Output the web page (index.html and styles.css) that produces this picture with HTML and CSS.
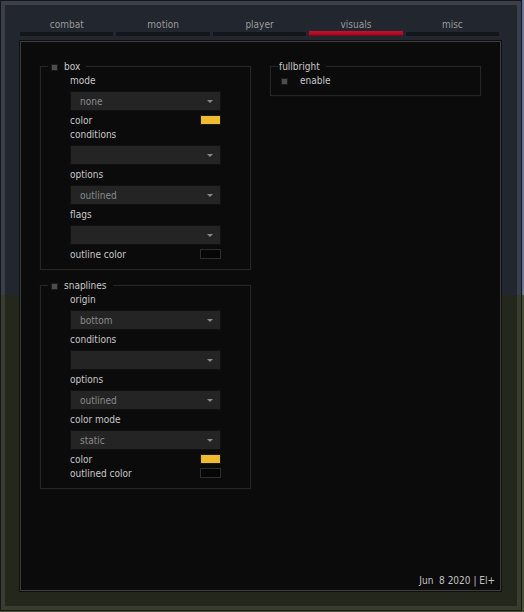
FILE: index.html
```html
<!DOCTYPE html>
<html>
<head>
<meta charset="utf-8">
<link rel="stylesheet" href="styles.css">
</head>
<body>
<div class="window">
  <div class="inner">
    <div class="tabs">
      <div class="tab"><span class="tab-label">combat</span><span class="tab-bar"></span></div>
      <div class="tab"><span class="tab-label">motion</span><span class="tab-bar"></span></div>
      <div class="tab"><span class="tab-label">player</span><span class="tab-bar"></span></div>
      <div class="tab active"><span class="tab-label">visuals</span><span class="tab-bar"></span></div>
      <div class="tab"><span class="tab-label">misc</span><span class="tab-bar"></span></div>
    </div>
    <div class="panel">
      <div class="columns">
        <div class="column">
          <fieldset class="group">
            <legend class="legend"><span class="check"></span><span>box</span></legend>
            <div class="rows">
              <div class="label">mode</div>
              <div class="select"><span>none</span><i class="arrow"></i></div>
              <div class="label split">color <span class="swatch yellow"></span></div>
              <div class="label">conditions</div>
              <div class="select"><span></span><i class="arrow"></i></div>
              <div class="label">options</div>
              <div class="select"><span>outlined</span><i class="arrow"></i></div>
              <div class="label">flags</div>
              <div class="select"><span></span><i class="arrow"></i></div>
              <div class="label split">outline color <span class="swatch black"></span></div>
            </div>
          </fieldset>
          <fieldset class="group">
            <legend class="legend"><span class="check"></span><span>snaplines</span></legend>
            <div class="rows">
              <div class="label">origin</div>
              <div class="select"><span>bottom</span><i class="arrow"></i></div>
              <div class="label">conditions</div>
              <div class="select"><span></span><i class="arrow"></i></div>
              <div class="label">options</div>
              <div class="select"><span>outlined</span><i class="arrow"></i></div>
              <div class="label">color mode</div>
              <div class="select"><span>static</span><i class="arrow"></i></div>
              <div class="label split">color <span class="swatch yellow"></span></div>
              <div class="label split">outlined color <span class="swatch black"></span></div>
            </div>
          </fieldset>
        </div>
        <div class="column">
          <fieldset class="group">
            <legend class="legend plain">fullbright</legend>
            <div class="check-row"><span class="check"></span><span>enable</span></div>
          </fieldset>
        </div>
      </div>
      <div class="footer">Jun&nbsp;&nbsp;8 2020 | El+</div>
    </div>
  </div>
</div>
</body>
</html>
```

FILE: styles.css
```css
html, body {
  margin: 0;
  height: 100%;
}
body {
  background: linear-gradient(to bottom, #66779a 0, #66779a 295px, #4a5232 295px) fixed;
  font-family: "DejaVu Sans", "Liberation Sans", Arial, sans-serif;
  font-stretch: condensed;
  font-size: 10px;
  color: #c8c8c8;
}
.window {
  width: 522px;
  height: 611px;
  box-sizing: border-box;
  border: 1px solid #15171b;
  padding: 4px;
  background: linear-gradient(to bottom, #3a3f4a 0, #3a3f4a 295px, #393d2f 295px) fixed;
}
.inner {
  height: 100%;
  box-sizing: border-box;
  background: linear-gradient(to bottom, #22262e 0, #22262e 295px, #23271c 295px) fixed;
  padding: 12px 16px 15px 15px;
  display: flex;
  flex-direction: column;
}
.tabs {
  display: flex;
  gap: 3px;
  margin-right: 2px;
}
.tab {
  flex: 1;
  display: flex;
  flex-direction: column;
  align-items: stretch;
}
.tab-label {
  text-align: center;
  line-height: 15px;
  color: #9a9a9a;
}
.tab-bar {
  height: 4px;
  background: #151619;
}
.tab.active .tab-bar {
  height: 5px;
  margin-top: -1px;
  background: linear-gradient(to bottom, #c8102e 0, #b00c28 60%, #6e0716 100%);
}
.panel {
  margin-top: 5px;
  flex: 1;
  background: #0b0b0b;
  border: 1px solid #3c3c3c;
  box-shadow: 0 0 0 1px #101010;
  display: flex;
  flex-direction: column;
  padding: 17px 5px 2px 19px;
}
.columns {
  flex: 1;
  display: grid;
  grid-template-columns: 211px 211px;
  column-gap: 19px;
  align-items: start;
}
.column {
  display: flex;
  flex-direction: column;
  gap: 8px;
}
.group {
  margin: 0;
  padding: 0 0 8px 0;
  min-width: 0;
  border: 1px solid #262626;
  box-shadow: 0 0 0 1px #0e0e0e;
}
.legend {
  margin-left: 7px;
  padding: 2px 6px 0 3px;
  line-height: 12px;
  height: 14px;
  box-sizing: border-box;
  display: flex;
  align-items: center;
  color: #c8c8c8;
}
.legend.plain {
  display: block;
  padding-left: 1px;
}
.check {
  width: 5px;
  height: 5px;
  background: #4c4c4c;
  border: 1px solid #1c1c1c;
  display: inline-block;
  flex: none;
}
.legend .check {
  margin-right: 6px;
}
.rows {
  padding: 0 29px;
  display: flex;
  flex-direction: column;
}
.label {
  height: 14px;
  box-sizing: border-box;
  padding-top: 2px;
  line-height: 12px;
}
.label.split {
  display: flex;
  justify-content: space-between;
  align-items: center;
}
.label.split .swatch {
  margin-top: -2px;
}
.select {
  margin: 4px 0 2px;
  height: 20px;
  box-sizing: border-box;
  background: #242424;
  border: 1px solid #111111;
  display: flex;
  align-items: center;
  justify-content: space-between;
  padding: 1px 7px 0 9px;
  color: #8a8a8a;
}
.arrow {
  width: 0;
  height: 0;
  border-left: 3px solid transparent;
  border-right: 3px solid transparent;
  border-top: 3px solid #8a8a8a;
}
.swatch {
  width: 19px;
  height: 8px;
  border: 1px solid #1a1a1a;
  display: inline-block;
}
.swatch.yellow {
  background: #efbb30;
}
.swatch.black {
  background: #060606;
  border-color: #2e2e2e;
}
.check-row {
  display: flex;
  align-items: center;
  height: 14px;
  box-sizing: border-box;
  padding: 2px 0 0 10px;
  line-height: 12px;
}
.check-row .check {
  margin-right: 12px;
}
.footer {
  text-align: right;
  line-height: 14px;
  padding-top: 1px;
  color: #c2c2c2;
}
```
